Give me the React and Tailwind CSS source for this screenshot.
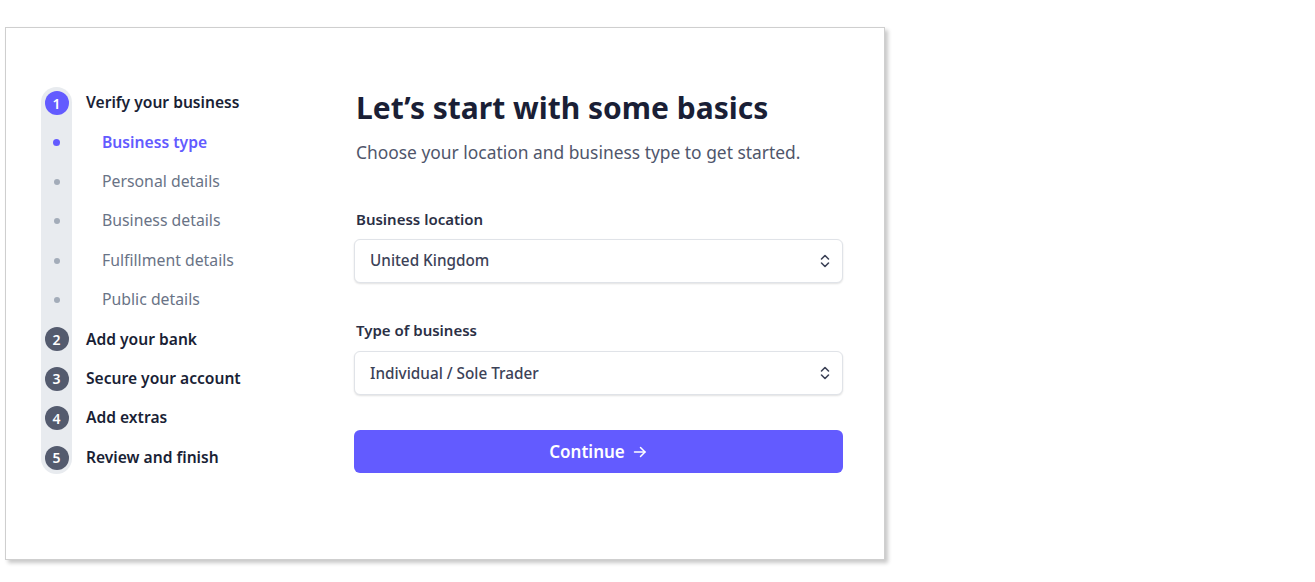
import React from "react";

const font = { fontFamily: '"Noto Sans", "Open Sans", sans-serif' };

function UpDown() {
  return (
    <svg width="12" height="16" viewBox="0 0 12 16" fill="none" stroke="#3c4257" strokeWidth="1.6" strokeLinecap="round" strokeLinejoin="round">
      <path d="M2.5 6 L6 2.5 L9.5 6" />
      <path d="M2.5 10 L6 13.5 L9.5 10" />
    </svg>
  );
}

function Select({ value }) {
  return (
    <div className="flex h-[44px] w-full items-center justify-between rounded-[6px] border border-[#e0e3e8] bg-white pl-[15px] pr-[11px] shadow-[0_1px_2px_rgba(0,0,0,0.12)]">
      <span className="text-[15.3px] font-medium text-[#3c4257]">{value}</span>
      <UpDown />
    </div>
  );
}

const steps = [
  { kind: "num", n: "1", label: "Verify your business", active: true },
  { kind: "dot", label: "Business type", active: true },
  { kind: "dot", label: "Personal details" },
  { kind: "dot", label: "Business details" },
  { kind: "dot", label: "Fulfillment details" },
  { kind: "dot", label: "Public details" },
  { kind: "num", n: "2", label: "Add your bank" },
  { kind: "num", n: "3", label: "Secure your account" },
  { kind: "num", n: "4", label: "Add extras" },
  { kind: "num", n: "5", label: "Review and finish" },
];

export default function App() {
  return (
    <div className="min-h-[582px] w-[1315px] bg-white" style={font}>
      <div className="ml-[5px] pt-[27px]">
        <div className="flex h-[533px] w-[880px] border border-[#cfcfcf] bg-white pl-[35px] pt-[59px] shadow-[3px_3px_4px_rgba(0,0,0,0.22)]">
          {/* Sidebar */}
          <div className="flex w-[313px] gap-[14px]">
            <div className="flex h-fit w-[31px] flex-col items-center gap-[15.4px] rounded-full bg-[#e8ebef] py-[4px]">
              {steps.map((s, i) =>
                s.kind === "num" ? (
                  <div
                    key={i}
                    className={
                      "flex h-[24px] w-[24px] items-center justify-center rounded-full text-[14px] font-semibold text-white " +
                      (s.active ? "bg-[#635bff]" : "bg-[#545b6e]")
                    }
                  >
                    {s.n}
                  </div>
                ) : (
                  <div key={i} className="flex h-[24px] w-[24px] items-center justify-center">
                    <div className={"rounded-full " + (s.active ? "h-[7px] w-[7px] bg-[#635bff]" : "h-[6px] w-[6px] bg-[#a3acb9]")} />
                  </div>
                )
              )}
            </div>
            <div className="flex flex-col gap-[15.4px] py-[4px]">
              {steps.map((s, i) => (
                <div
                  key={i}
                  className={
                    "flex h-[24px] items-center whitespace-nowrap " +
                    (s.kind === "num"
                      ? "text-[15.6px] font-semibold text-[#1a1f36]"
                      : s.active
                      ? "pl-[16px] text-[15.7px] font-semibold text-[#635bff]"
                      : "pl-[16px] text-[15.8px] text-[#697386]")
                  }
                >
                  {s.label}
                </div>
              ))}
            </div>
          </div>
          {/* Main */}
          <div className="flex w-[489px] flex-col pt-[1px]">
            <h1 className="ml-[2px] text-[30px] font-bold leading-[40px] text-[#1a1f36]">Let’s start with some basics</h1>
            <p className="ml-[2px] mt-[11px] text-[17.4px] leading-[26px] text-[#4f566b]">Choose your location and business type to get started.</p>
            <label className="ml-[2px] mt-[43px] text-[15px] font-semibold text-[#2a2f45]">Business location</label>
            <div className="mt-[8px]">
              <Select value="United Kingdom" />
            </div>
            <label className="ml-[2px] mt-[36px] text-[15px] font-semibold text-[#2a2f45]">Type of business</label>
            <div className="mt-[10px]">
              <Select value="Individual / Sole Trader" />
            </div>
            <button className="mt-[35px] flex h-[43px] w-full items-center justify-center gap-[7px] rounded-[6px] bg-[#635bff] text-[17px] font-semibold text-white">
              Continue
              <svg width="16" height="16" viewBox="0 0 16 16" fill="none" stroke="white" strokeWidth="1.5" strokeLinecap="round" strokeLinejoin="round">
                <path d="M2.5 8 H13" />
                <path d="M8.5 3.5 L13 8 L8.5 12.5" />
              </svg>
            </button>
          </div>
        </div>
      </div>
    </div>
  );
}
